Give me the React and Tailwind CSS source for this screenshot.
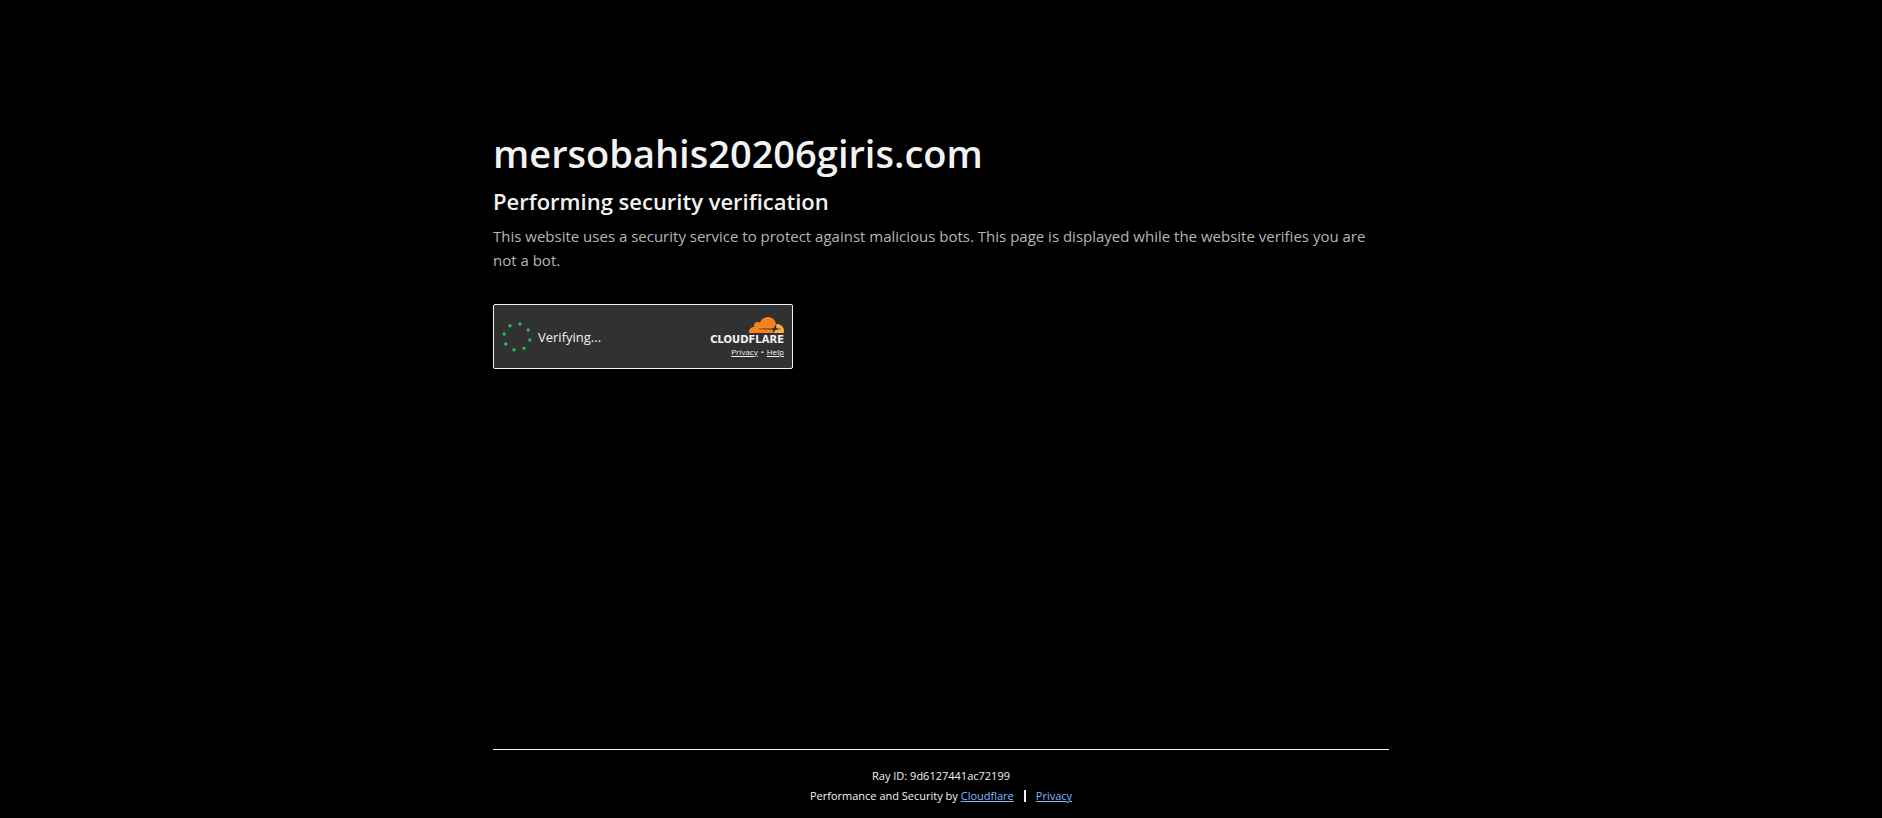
const dots = [0, 45, 90, 135, 180, 225, 270, 315];

function Spinner() {
  return (
    <svg viewBox="0 0 30 30" className="h-[30px] w-[30px]" aria-hidden="true">
      <g fill="#2db35e" transform="rotate(13 15 15)">
        {dots.map((angle) => (
          <circle key={angle} cx="15" cy="1.8" r="1.7" transform={`rotate(${angle} 15 15)`} />
        ))}
      </g>
    </svg>
  );
}

function CloudLogo() {
  return (
    <svg viewBox="0 6.57 24 10.86" className="h-4 w-[35px]" aria-hidden="true">
      <path
        fill="#f6821f"
        d="M16.5088 16.8447c.1475-.5068.0908-.9707-.1553-1.3154-.2246-.3164-.6045-.499-1.0615-.5205l-8.6592-.1123a.1559.1559 0 0 1-.1333-.0713c-.0283-.042-.0351-.0986-.021-.1553.0278-.084.1123-.1484.2036-.1562l8.7359-.1123c1.0351-.0489 2.1601-.8868 2.5537-1.9136l.499-1.3013c.0215-.0561.0293-.1128.0147-.168-.5625-2.5463-2.835-4.4453-5.5499-4.4453-2.5039 0-4.6284 1.6177-5.3876 3.8614-.4927-.3658-1.1187-.5625-1.794-.499-1.2026.119-2.1665 1.083-2.2861 2.2856-.0283.31-.0069.6128.0635.894C1.5683 13.171 0 14.7754 0 16.752c0 .1748.0142.3515.0352.5273.0141.083.0844.1475.1689.1475h15.9814c.0909 0 .1758-.0645.2032-.1553l.12-.4268z"
      />
      <path
        fill="#fbad41"
        d="M19.2656 11.2813c-.0771 0-.1611 0-.2383.0112-.0566 0-.1054.0415-.127.0976l-.3378 1.1744c-.1475.5068-.0918.9707.1543 1.3164.2256.3164.6055.498 1.0625.5195l1.8437.1133c.0557 0 .1055.0263.1329.0703.0283.043.0351.1074.0214.1562-.0283.084-.1132.1485-.204.1553l-1.921.1123c-1.041.0488-2.1582.8867-2.5527 1.914l-.1406.3585c-.0283.0713.0215.1416.0986.1416h6.5977c.0771 0 .1474-.0489.169-.126.1122-.4082.1757-.837.1757-1.2803 0-2.6025-2.125-4.727-4.7344-4.727z"
      />
    </svg>
  );
}

function Widget() {
  return (
    <div className="flex h-[65px] w-[300px] items-center justify-between rounded-xs border border-[#f2f2f2] bg-[#313131] px-2">
      <div className="flex items-center gap-1.5" role="status">
        <Spinner />
        <span className="text-[13px] leading-5">Verifying...</span>
      </div>
      <div className="flex flex-col items-end">
        <CloudLogo />
        <span className="mt-0.5 font-['DejaVu_Sans',sans-serif] text-[10px] leading-[10px] font-bold">CLOUDFLARE</span>
        <div className="mt-0.5 flex gap-[3px] text-[8px] leading-[10px]">
          <a href="#privacy" className="underline">Privacy</a>
          <span>•</span>
          <a href="#help" className="underline">Help</a>
        </div>
      </div>
    </div>
  );
}

function App() {
  return (
    <div className="flex min-h-screen flex-col bg-black font-['Open_Sans','Noto_Sans',sans-serif] text-[#f2f2f2]">
      <main className="mx-auto w-full max-w-[960px] flex-1 px-8 pt-32">
        <h1 className="text-[38px] leading-[50px] font-semibold">mersobahis20206giris.com</h1>
        <h2 className="mt-2 text-[22px] leading-[30px] font-semibold">Performing security verification</h2>
        <p className="mt-2 text-[15px] leading-6 text-[#b6b6b6]">
          This website uses a security service to protect against malicious bots. This page is displayed while the
          website verifies you are not a bot.
        </p>
        <div className="mt-8">
          <Widget />
        </div>
      </main>
      <footer className="mx-auto w-full max-w-[960px] px-8">
        <div className="border-t border-[#f2f2f2] pt-4 pb-3 text-center text-[11px] leading-5">
          <div>
            Ray ID: <span>9d6127441ac72199</span>
          </div>
          <div className="flex items-center justify-center">
            <span>
              Performance and Security by{" "}
              <a href="#cloudflare" className="text-[#82b6ff] underline">Cloudflare</a>
            </span>
            <span className="mx-2.5 h-3 w-0.5 bg-[#f2f2f2]" />
            <a href="#privacy" className="text-[#82b6ff] underline">Privacy</a>
          </div>
        </div>
      </footer>
    </div>
  );
}

export default App;
